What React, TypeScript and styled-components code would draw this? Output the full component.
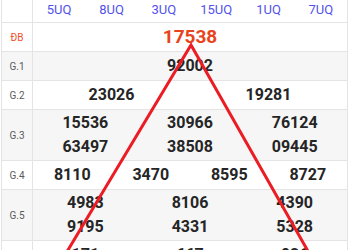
import React from 'react';
import styled, { createGlobalStyle } from 'styled-components';

const GlobalStyle = createGlobalStyle`
  html, body {
    margin: 0;
    padding: 0;
    background: #fff;
    overflow: hidden;
  }
  body {
    font-family: Roboto, "Liberation Sans", Arial, sans-serif;
  }
`;

const Page = styled.div`
  position: relative;
  width: 350px;
  height: 250px;
  overflow: hidden;
  padding-left: 1px;
  box-sizing: border-box;
`;

const Table = styled.div`
  width: 347px;
  border-left: 1px solid #e4e4e4;
  border-right: 1px solid #e4e4e4;
  box-sizing: border-box;
`;

const Row = styled.div<{ $shade?: boolean }>`
  display: grid;
  grid-template-columns: 31px 1fr;
  background: ${(p) => (p.$shade ? '#f6f6f6' : '#fff')};
  border-bottom: 1px solid #e4e4e4;
`;

const Label = styled.div<{ $special?: boolean }>`
  display: flex;
  align-items: center;
  justify-content: center;
  border-right: 1px solid #e4e4e4;
  font-size: 10px;
  color: ${(p) => (p.$special ? '#f0502a' : '#5a5a5a')};
`;

const Cells = styled.div<{ $cols: number }>`
  display: grid;
  grid-template-columns: repeat(${(p) => p.$cols}, 1fr);
  padding: 1px 0;
`;

const HeaderCell = styled.div`
  height: 22px;
  padding-bottom: 4px;
  box-sizing: border-box;
  display: flex;
  align-items: center;
  justify-content: center;
  font-size: 13px;
  color: #5252ea;
`;

const Cell = styled.div`
  display: flex;
  flex-direction: column;
  align-items: center;
  justify-content: center;
`;

const Num = styled.div`
  height: 24px;
  line-height: 24px;
  font-size: 16px;
  font-weight: 700;
  color: #252525;
  &:only-child {
    height: 26px;
    line-height: 26px;
  }
`;

const Special = styled.div`
  height: 26px;
  line-height: 26px;
  font-size: 19px;
  font-weight: 700;
  color: #e8431c;
`;

const Overlay = styled.svg`
  position: absolute;
  left: 0;
  top: 0;
  pointer-events: none;
`;

const provinces = ['5UQ', '8UQ', '3UQ', '15UQ', '1UQ', '7UQ'];

const prizes: { label: string; cols: number; nums: string[][] }[] = [
  { label: 'G.1', cols: 1, nums: [['92002']] },
  { label: 'G.2', cols: 2, nums: [['23026'], ['19281']] },
  { label: 'G.3', cols: 3, nums: [['15536', '63497'], ['30966', '38508'], ['76124', '09445']] },
  { label: 'G.4', cols: 4, nums: [['8110'], ['3470'], ['8595'], ['8727']] },
  { label: 'G.5', cols: 3, nums: [['4983', '9195'], ['8106', '4331'], ['4390', '5328']] },
  { label: 'G.6', cols: 3, nums: [['171'], ['667'], ['926']] },
  { label: 'G.7', cols: 4, nums: [['54'], ['08'], ['37'], ['92']] },
];

const App = () => {
  return (
    <Page>
      <GlobalStyle />
      <Table>
        <Row>
          <Label />
          <Cells $cols={6} style={{ padding: 0 }}>
            {provinces.map((p) => (
              <HeaderCell key={p}>{p}</HeaderCell>
            ))}
          </Cells>
        </Row>
        <Row>
          <Label $special>ĐB</Label>
          <Cells $cols={1}>
            <Cell>
              <Special>17538</Special>
            </Cell>
          </Cells>
        </Row>
        {prizes.map((prize, i) => (
          <Row key={prize.label} $shade={i % 2 === 0}>
            <Label>{prize.label}</Label>
            <Cells $cols={prize.cols}>
              {prize.nums.map((group, j) => (
                <Cell key={j}>
                  {group.map((n) => (
                    <Num key={n}>{n}</Num>
                  ))}
                </Cell>
              ))}
            </Cells>
          </Row>
        ))}
      </Table>
      <Overlay width="350" height="250" viewBox="0 0 350 250">
        <polyline
          points="62,260 191,45 313,260"
          fill="none"
          stroke="#ec1c24"
          strokeWidth="3"
          strokeLinejoin="miter"
        />
      </Overlay>
    </Page>
  );
};

export default App;
